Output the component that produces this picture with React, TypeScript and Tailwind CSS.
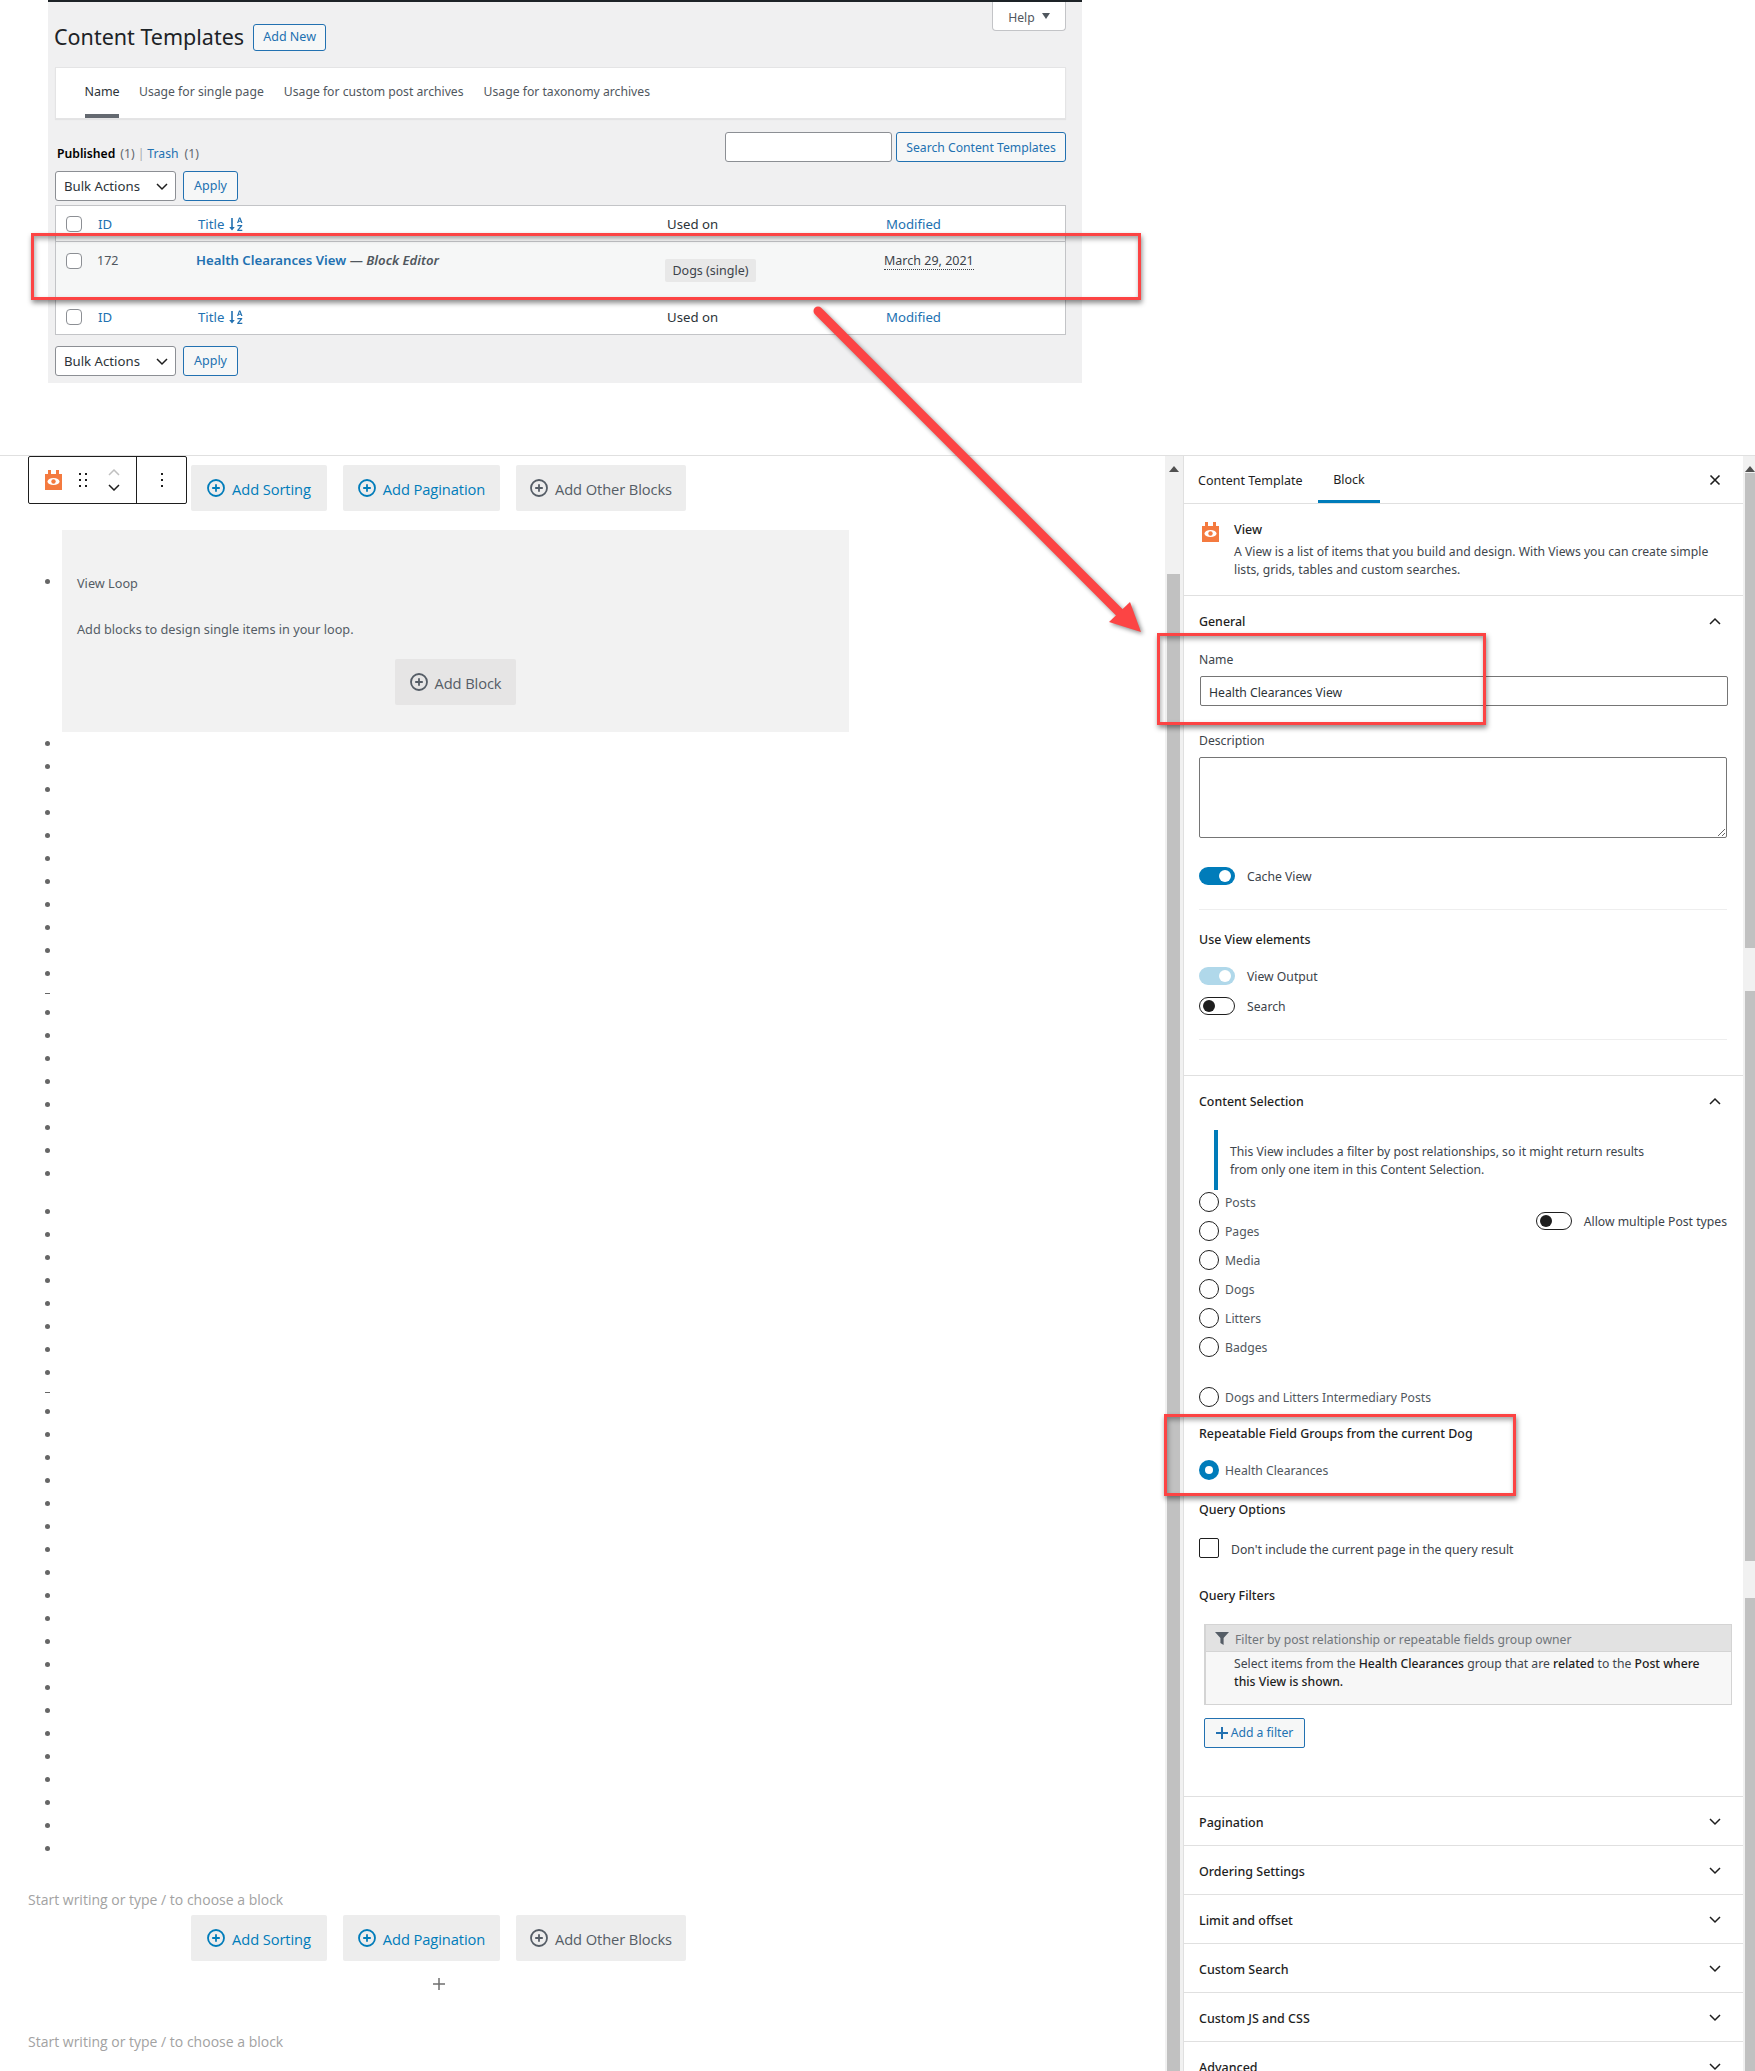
import React from "react";

const PlusCircle = ({ c }: { c: string }) => (
  <svg width="18" height="18" viewBox="0 0 18 18" fill="none" className="shrink-0">
    <circle cx="9" cy="9" r="8" stroke={c} strokeWidth="1.8" />
    <path d="M9 5.2v7.6M5.2 9h7.6" stroke={c} strokeWidth="1.8" />
  </svg>
);

const ViewIcon = ({ w, h }: { w: number; h: number }) => (
  <svg width={w} height={h} viewBox="0 0 17 20" className="shrink-0">
    <path d="M0 4h3V0h3v4h5V0h3v4h3v16H0z" fill="#f47a3f" />
    <ellipse cx="8.5" cy="11.5" rx="6" ry="3.6" fill="#fff" />
    <circle cx="8.5" cy="11.5" r="2.2" fill="#f47a3f" />
  </svg>
);

const Chevron = ({ up, className }: { up?: boolean; className?: string }) => (
  <svg width="14" height="9" viewBox="0 0 14 9" fill="none" className={className}>
    <path d={up ? "M2 7l5-5 5 5" : "M2 2l5 5 5-5"} stroke="#1e1e1e" strokeWidth="1.5" />
  </svg>
);

const ActionButton = ({ label, color, w }: { label: string; color: string; w: string }) => (
  <div className={`${w} h-[46px] bg-[#ededed] rounded-[2px] flex items-center justify-center gap-[7px]`}>
    <PlusCircle c={color} />
    <span className="pt-[1px] text-[14.7px] font-medium font-['Open_Sans',sans-serif] tracking-[-0.1px]" style={{ color }}>{label}</span>
  </div>
);

const ActionRow = () => (
  <div className="flex gap-[16px]">
    <ActionButton label="Add Sorting" color="#007cba" w="w-[136px]" />
    <ActionButton label="Add Pagination" color="#007cba" w="w-[157px]" />
    <ActionButton label="Add Other Blocks" color="#555d66" w="w-[170px]" />
  </div>
);

const Bullets = ({ n }: { n: number }) => (
  <ul>
    {Array.from({ length: n }).map((_, i) => (
      <li key={i} className="h-[23px] pl-[45px] flex items-center">
        <span className="w-[5px] h-[5px] rounded-full bg-[#666]" />
      </li>
    ))}
  </ul>
);

const Dash = () => (
  <div className="h-[16px] pl-[45px] flex items-center">
    <span className="w-[5px] h-px bg-[#666]" />
  </div>
);

const Toggle = ({ mode }: { mode: "on" | "off" | "muted" }) => {
  if (mode === "off")
    return (
      <span className="w-[36px] h-[18px] rounded-full border border-[#1e1e1e] bg-white flex items-center pl-[3px] shrink-0">
        <span className="w-[12px] h-[12px] rounded-full bg-[#1e1e1e]" />
      </span>
    );
  return (
    <span className={`w-[36px] h-[18px] rounded-full flex items-center justify-end pr-[4px] shrink-0 ${mode === "on" ? "bg-[#007cba]" : "bg-[#b0d8ea]"}`}>
      <span className="w-[12px] h-[12px] rounded-full bg-white" />
    </span>
  );
};

const Radio = ({ label, checked }: { label: string; checked?: boolean }) => (
  <div className="flex items-center h-[20px] gap-[6px]">
    {checked ? (
      <span className="w-[20px] h-[20px] rounded-full bg-[#007cba] flex items-center justify-center shrink-0">
        <span className="w-[8px] h-[8px] rounded-full bg-white" />
      </span>
    ) : (
      <span className="w-[20px] h-[20px] rounded-full border border-[#1e1e1e] shrink-0" />
    )}
    <span className="pt-[2px] text-[#50575e]">{label}</span>
  </div>
);

const Heading = ({ children, className = "" }: { children: React.ReactNode; className?: string }) => (
  <div className={`h-[18px] pt-[1px] leading-[18px] text-[12.4px] font-medium text-[#1e1e1e] ${className}`}>{children}</div>
);

const Collapsed = ({ label }: { label: string }) => (
  <div className="h-[49px] shrink-0 border-b border-[#e0e0e0] pl-[15px] pr-[21px] flex items-center justify-between">
    <span className="pt-[3px] text-[12.5px] font-medium text-[#1e1e1e]">{label}</span>
    <Chevron />
  </div>
);

const SortIcon = () => (
  <svg width="14" height="14" viewBox="0 0 14 14" className="ml-[5px] shrink-0" fill="#2271b1">
    <path d="M2.2 1h1.6v9h2L3 13.5.2 10h2z" />
    <path d="M8 6l2-5.5h1.4L13.5 6h-1.3l-.4-1.2H9.7L9.3 6zm2-2.2h1.4l-.7-2z" />
    <path d="M8.4 8h4.8v1L10 12.7h3.3V14H8.2v-1l3.2-3.7h-3z" />
  </svg>
);

const Cb = () => <span className="block w-[16px] h-[16px] rounded-[4px] border border-[#8c8f94] bg-white" />;

const HeadRow = ({ h }: { h: string }) => (
  <div className={`grid grid-cols-[42px_100px_469px_219px_1fr] items-center text-[13.2px] ${h}`}>
    <div className="pl-[10px]"><Cb /></div>
    <span className="pt-[1px] text-[#2271b1]">ID</span>
    <span className="pt-[1px] flex items-center text-[#2271b1]">Title<SortIcon /></span>
    <span className="pt-[1px] text-[#2c3338]">Used on</span>
    <span className="pt-[1px] text-[#2271b1]">Modified</span>
  </div>
);

const Bulk = () => (
  <div className="flex gap-[7px]">
    <div className="w-[121px] h-[30px] rounded-[3px] border border-[#8c8f94] bg-white flex items-center justify-between pl-[8px] pr-[6px] text-[#2c3338] text-[13.2px]">
      Bulk Actions
      <Chevron />
    </div>
    <div className="w-[55px] h-[30px] rounded-[3px] border border-[#2271b1] bg-[#f6f7f7] flex items-center justify-center text-[12.5px] text-[#2271b1]">Apply</div>
  </div>
);

const RedBox = ({ className }: { className: string }) => (
  <div className={`absolute border-[3px] border-[#fc4444] shadow-[1px_3px_5px_rgba(0,0,0,0.45),inset_1px_3px_5px_rgba(0,0,0,0.35)] ${className}`} />
);

const Triangle = () => (
  <svg width="10" height="6" viewBox="0 0 10 6" fill="#505050"><path d="M5 0l5 6H0z" /></svg>
);

export default function App() {
  return (
    <div className="relative w-[1755px] h-[2071px] overflow-hidden bg-white text-[12.2px] leading-[18px] text-[#3c434a] font-['Noto_Sans',sans-serif]">
      {/* Content Templates admin page */}
      <div className="h-[456px] border-b border-[#e0e0e0] pl-[48px]">
        <div className="w-[1034px] h-[383px] bg-[#f0f0f1] border-t-2 border-[#1d2327] pl-[7px] pr-[16px]">
          <div className="h-[65px] flex justify-between">
            <div className="flex items-center h-[44px] mt-[13px] -ml-[1px] gap-[9px]">
              <span className="text-[21.5px] leading-[28px] text-[#1d2327]">Content Templates</span>
              <span className="w-[73px] h-[27px] rounded-[3px] border border-[#2271b1] bg-[#f6f7f7] flex items-center justify-center text-[12.5px] text-[#2271b1]">Add New</span>
            </div>
            <div className="w-[74px] h-[29px] bg-white border border-t-0 border-[#c3c4c7] rounded-b-[4px] flex items-center justify-center gap-[7px] text-[#50575e]">
              <span className="pt-[3px]">Help</span>
              <svg width="8" height="6" viewBox="0 0 8 6" fill="#50575e"><path d="M0 0h8L4 6z" /></svg>
            </div>
          </div>
          <div className="h-[52px] bg-white border border-[#e4e4e5] shadow-[0_1px_1px_rgba(0,0,0,0.05)] pl-[29px] flex gap-[20px]">
            <div className="w-[34px] flex items-center justify-center text-[12.5px] text-[#2c3338] h-[50px] border-b-[4px] border-[#646970] pt-[1px] whitespace-nowrap">Name</div>
            <span className="h-[50px] pb-[2px] flex items-center text-[#50575e]">Usage for single page</span>
            <span className="h-[50px] pb-[2px] flex items-center text-[#50575e]">Usage for custom post archives</span>
            <span className="h-[50px] pb-[2px] flex items-center text-[#50575e]">Usage for taxonomy archives</span>
          </div>
          <div className="h-[81px] flex justify-between">
            <div>
              <div className="mt-[26px] h-[18px] flex items-center pl-[2px] text-[#646970]">
                <span className="font-semibold text-[#000]">Published</span>
                <span className="ml-[5px]">(1)</span>
                <span className="ml-[3px] text-[#a7aaad]">|</span>
                <span className="ml-[3px] text-[#2271b1]">Trash</span>
                <span className="ml-[6px]">(1)</span>
              </div>
              <div className="mt-[8px]"><Bulk /></div>
            </div>
            <div className="flex mt-[13px] gap-[4px]">
              <div className="w-[167px] h-[30px] rounded-[3px] border border-[#8c8f94] bg-white" />
              <div className="w-[170px] h-[30px] rounded-[3px] border border-[#2271b1] bg-[#f6f7f7] flex items-center justify-center text-[#2271b1]"><span className="pt-[1px]">Search Content Templates</span></div>
            </div>
          </div>
          <div className="mt-[5px] h-[130px] border border-[#c3c4c7] bg-white">
            <HeadRow h="h-[35px]" />
            <div className="h-[59px] bg-[#f6f7f7] border-t border-[#c3c4c7] grid grid-cols-[42px_100px_469px_219px_1fr] items-start text-[12.5px]">
              <div className="pl-[10px] pt-[11px]"><Cb /></div>
              <span className="pt-[10px] -ml-[1px] text-[#50575e]">172</span>
              <span className="pt-[9px] -ml-[2px] text-[13.2px] text-[#2271b1] font-semibold whitespace-nowrap">
                Health Clearances View <span className="text-[#50575e] font-semibold">— <i>Block Editor</i></span>
              </span>
              <span className="pt-[17px] -ml-[2px]">
                <span className="inline-flex items-center justify-center w-[91px] h-[23px] bg-[#e8e8e8] text-[#3c434a] rounded-[2px]">Dogs (single)</span>
              </span>
              <span className="pt-[10px] -ml-[2px]">
                <span className="border-b border-dotted border-[#3c434a]">March 29, 2021</span>
              </span>
            </div>
            <HeadRow h="h-[33px]" />
          </div>
          <div className="mt-[11px]"><Bulk /></div>
        </div>
      </div>

      {/* Editor */}
      <div className="flex h-[1615px]">
        <main className="w-[1165px] shrink-0">
          <div className="flex items-start pl-[28px]">
            <div className="w-[159px] h-[48px] bg-white border border-[#1e1e1e] rounded-[2px] flex">
              <div className="w-[108px] border-r border-[#1e1e1e] flex items-center pl-[16px]">
                <ViewIcon w={17} h={20} />
                <svg width="10" height="16" viewBox="0 0 10 16" fill="#1e1e1e" className="ml-[16px]">
                  <rect x="1" y="1" width="2" height="2" /><rect x="7" y="1" width="2" height="2" />
                  <rect x="1" y="7" width="2" height="2" /><rect x="7" y="7" width="2" height="2" />
                  <rect x="1" y="13" width="2" height="2" /><rect x="7" y="13" width="2" height="2" />
                </svg>
                <div className="ml-[20px] flex flex-col gap-[8px]">
                  <svg width="12" height="7" viewBox="0 0 12 7" fill="none"><path d="M1 6l5-5 5 5" stroke="#c0c0c0" strokeWidth="1.5" /></svg>
                  <svg width="12" height="7" viewBox="0 0 12 7" fill="none"><path d="M1 1l5 5 5-5" stroke="#1e1e1e" strokeWidth="1.5" /></svg>
                </div>
              </div>
              <div className="flex-1 flex items-center justify-center">
                <svg width="4" height="16" viewBox="0 0 4 16" fill="#1e1e1e">
                  <rect x="1" y="1" width="2" height="2" /><rect x="1" y="7" width="2" height="2" /><rect x="1" y="13" width="2" height="2" />
                </svg>
              </div>
            </div>
            <div className="ml-[4px] mt-[9px]"><ActionRow /></div>
          </div>

          <div className="mt-[19px] flex items-start pl-[45px]">
            <span className="w-[5px] h-[5px] rounded-full bg-[#666] mt-[49px]" />
            <div className="ml-[12px] w-[787px] h-[202px] bg-[#f2f2f2] pl-[15px] pt-[44px] text-[12.7px] text-[#555d66]">
              <div>View Loop</div>
              <div className="mt-[28px]">Add blocks to design single items in your loop.</div>
              <div className="mt-[21px] ml-[318px] w-[121px] h-[46px] bg-[#e6e5e5] rounded-[2px] flex items-center justify-center gap-[7px]">
                <PlusCircle c="#555d66" />
                <span className="pt-[1px] text-[14.7px] font-medium font-['Open_Sans',sans-serif] tracking-[-0.1px]">Add Block</span>
              </div>
            </div>
          </div>

          <Bullets n={11} />
          <Dash />
          <Bullets n={8} />
          <div className="h-[15px]" />
          <Bullets n={8} />
          <Dash />
          <Bullets n={20} />

          <div className="mt-[29px] pl-[28px] h-[22px] leading-[22px] text-[14px] text-[#a2a2a2] font-['Open_Sans',sans-serif]">Start writing or type / to choose a block</div>
          <div className="mt-[4px] pl-[191px]"><ActionRow /></div>
          <div className="mt-[11px] pl-[427px]">
            <svg width="24" height="24" viewBox="0 0 24 24" fill="none"><path d="M12 6v12M6 12h12" stroke="#6f6f6f" strokeWidth="1.5" /></svg>
          </div>
          <div className="mt-[35px] pl-[28px] h-[22px] leading-[22px] text-[14px] text-[#a2a2a2] font-['Open_Sans',sans-serif]">Start writing or type / to choose a block</div>
        </main>

        <div className="w-[18px] shrink-0 bg-[#f1f1f1] flex flex-col items-center pt-[10px]">
          <Triangle />
          <div className="mt-[102px] w-[13px] flex-1 bg-[#c1c1c1] -translate-x-[1px]" />
        </div>

        <aside className="w-[560px] shrink-0 border-l border-[#e0e0e0] flex flex-col text-[#3c434a]">
          <div className="h-[48px] shrink-0 border-b border-[#e0e0e0] flex pl-[14px] pr-[21px] items-center text-[12.5px]">
            <span className="pt-[2px] text-[#1e1e1e] w-[120px]">Content Template</span>
            <span className="w-[62px] h-[47px] pt-[3px] border-b-[3px] border-[#007cba] flex items-center justify-center text-[#1e1e1e]">Block</span>
            <svg width="14" height="14" viewBox="0 0 14 14" fill="none" className="ml-auto"><path d="M2.5 2.5l9 9M11.5 2.5l-9 9" stroke="#1e1e1e" strokeWidth="1.6" /></svg>
          </div>

          <div className="h-[92px] shrink-0 border-b border-[#e0e0e0] pl-[18px] pt-[18px] flex">
            <ViewIcon w={17} h={20} />
            <div className="ml-[15px] -mt-[1px]">
              <div className="text-[12.5px] font-medium text-[#1e1e1e]">View</div>
              <div className="mt-[4px] w-[490px] text-[#40464d]">A View is a list of items that you build and design. With Views you can create simple lists, grids, tables and custom searches.</div>
            </div>
          </div>

          <div className="h-[480px] shrink-0 border-b border-[#e0e0e0] px-[15px]">
            <div className="h-[50px] flex items-center justify-between pr-[6px]">
              <span className="pt-[2px] text-[12.4px] font-medium text-[#1e1e1e]">General</span>
              <Chevron up />
            </div>
            <div className="mt-[4px] h-[18px] pt-[1px]">Name</div>
            <div className="mt-[8px] ml-[1px] w-[528px] h-[30px] rounded-[2px] border border-[#757575] flex items-center pl-[8px] text-[#2c3338]"><span className="pt-[3px]">Health Clearances View</span></div>
            <div className="mt-[25px] h-[18px] pt-[1px]">Description</div>
            <textarea readOnly className="block mt-[8px] w-[528px] h-[81px] rounded-[2px] border border-[#757575] bg-white" />
            <div className="mt-[29px] flex items-center h-[18px] gap-[12px]"><Toggle mode="on" /><span className="pt-[2px]">Cache View</span></div>
            <div className="mt-[24px] h-px bg-[#eeeeee] w-[528px]" />
            <Heading className="mt-[20px]">Use View elements</Heading>
            <div className="mt-[19px] flex items-center h-[18px] gap-[12px]"><Toggle mode="muted" /><span className="pt-[2px]">View Output</span></div>
            <div className="mt-[12px] flex items-center h-[18px] gap-[12px]"><Toggle mode="off" /><span className="pt-[2px]">Search</span></div>
            <div className="mt-[24px] h-px bg-[#eeeeee] w-[528px]" />
          </div>

          <div className="h-[721px] shrink-0 border-b border-[#e0e0e0] px-[15px]">
            <div className="h-[50px] flex items-center justify-between pr-[6px]">
              <span className="pt-[2px] text-[12.4px] font-medium text-[#1e1e1e]">Content Selection</span>
              <Chevron up />
            </div>
            <div className="mt-[4px] ml-[15px] h-[60px] border-l-4 border-[#007cba] pl-[12px] pt-[13px] text-[#40464d]">
              <div>This View includes a filter by post relationships, so it might return results</div>
              <div>from only one item in this Content Selection.</div>
            </div>
            <div className="flex justify-between w-[528px] mt-[2px]">
              <div className="flex flex-col gap-[9px]">
                <Radio label="Posts" />
                <Radio label="Pages" />
                <Radio label="Media" />
                <Radio label="Dogs" />
                <Radio label="Litters" />
                <Radio label="Badges" />
              </div>
              <div className="flex items-center gap-[12px] h-[18px] mt-[20px]"><Toggle mode="off" /><span className="pt-[2px]">Allow multiple Post types</span></div>
            </div>
            <div className="mt-[30px]"><Radio label="Dogs and Litters Intermediary Posts" /></div>
            <Heading className="mt-[17px]">Repeatable Field Groups from the current Dog</Heading>
            <div className="mt-[18px]"><Radio label="Health Clearances" checked /></div>
            <Heading className="mt-[20px]">Query Options</Heading>
            <div className="mt-[20px] h-[20px] flex items-center gap-[12px]">
              <span className="w-[20px] h-[20px] rounded-[2px] border border-[#1e1e1e]" />
              <span className="pt-[3px]">Don't include the current page in the query result</span>
            </div>
            <Heading className="mt-[28px]">Query Filters</Heading>
            <div className="mt-[20px] ml-[5px] w-[528px] h-[81px] border border-l-2 border-[#d4d4d4] bg-[#f7f7f7]">
              <div className="h-[27px] bg-[#e2e2e2] border-b border-[#d4d4d4] flex items-center pl-[9px] gap-[6px] text-[#70757a]">
                <svg width="14" height="14" viewBox="0 0 14 14" fill="#555d66"><path d="M0 1h14L8.6 7v7L5.4 12V7z" /></svg>
                <span className="pt-[3px]">Filter by post relationship or repeatable fields group owner</span>
              </div>
              <div className="pl-[28px] pr-[20px] pt-[3px] text-[#40464d]">
                Select items from the <span className="font-medium text-[#1e1e1e]">Health Clearances</span> group that are <span className="font-medium text-[#1e1e1e]">related</span> to the <span className="font-medium text-[#1e1e1e]">Post where this View is shown.</span>
              </div>
            </div>
            <div className="mt-[13px] ml-[5px] w-[101px] h-[30px] rounded-[2px] border border-[#2271b1] bg-[#f6f7f7] flex items-center justify-center gap-[3px] text-[#2271b1]">
              <svg width="12" height="12" viewBox="0 0 12 12" fill="#2271b1"><path d="M5 0h2v5h5v2H7v5H5V7H0V5h5z" /></svg>
              Add a filter
            </div>
          </div>

          <Collapsed label="Pagination" />
          <Collapsed label="Ordering Settings" />
          <Collapsed label="Limit and offset" />
          <Collapsed label="Custom Search" />
          <Collapsed label="Custom JS and CSS" />
          <Collapsed label="Advanced" />
        </aside>

        <div className="w-[12px] shrink-0 bg-[#f1f1f1] flex flex-col pl-[2px]">
          <div className="h-[17px] flex items-center justify-center pt-[8px]"><Triangle /></div>
          <div className="h-[475px] bg-[#c1c1c1]" />
          <div className="h-[43px]" />
          <div className="h-[570px] bg-[#c1c1c1]" />
          <div className="h-[37px]" />
          <div className="flex-1 bg-[#c1c1c1]" />
        </div>
      </div>

      {/* Annotations */}
      <RedBox className="left-[31px] top-[233px] w-[1110px] h-[67px]" />
      <RedBox className="left-[1157px] top-[633px] w-[329px] h-[92px]" />
      <RedBox className="left-[1164px] top-[1414px] w-[352px] h-[82px]" />
      <svg width="1755" height="2071" viewBox="0 0 1755 2071" className="absolute left-0 top-0 pointer-events-none [filter:drop-shadow(2px_2px_2px_rgba(0,0,0,0.45))]">
        <path d="M818 311L1121 614" stroke="#fc4444" strokeWidth="9" strokeLinecap="round" />
        <path d="M1141 632L1130 602L1109 622z" fill="#fc4444" />
      </svg>
    </div>
  );
}
